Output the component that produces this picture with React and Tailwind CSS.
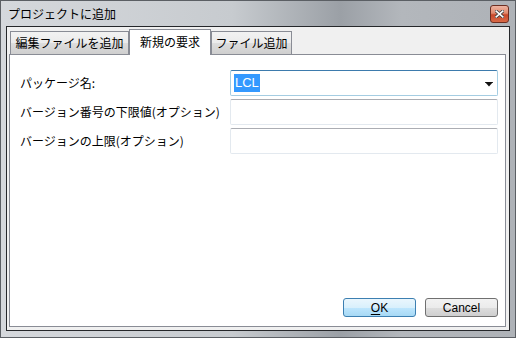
const jp = { fontFamily: '"Noto Sans CJK JP", "Liberation Sans", sans-serif' };

function Tab({ label, active, width }) {
  if (active) {
    return (
      <div
        className="relative z-10 -mb-px flex h-[26px] items-start justify-center border border-b-0 border-[#898c95] bg-white pt-[3px] text-[12px] text-black"
        style={{ width }}
      >
        {label}
      </div>
    );
  }
  return (
    <div
      className="flex h-[23px] items-start justify-center border border-b-0 border-[#898c95] bg-[linear-gradient(180deg,#f2f2f2_0%,#ebebeb_50%,#dddddd_51%,#cfcfcf_100%)] pt-[2px] text-[12px] text-black"
      style={{ width }}
    >
      {label}
    </div>
  );
}

function TextBox({ children, focused }) {
  return (
    <div
      className={
        'relative flex h-[26px] w-[268px] shrink-0 items-center rounded-[2px] border bg-white pl-[3px] ' +
        (focused
          ? 'border-[#a5cde2] border-t-[#3d7bad]'
          : 'border-[#e3e9ef] border-t-[#abadb3]')
      }
    >
      {children}
    </div>
  );
}

export default function App() {
  return (
    <div className="h-[338px] w-[516px] overflow-hidden" style={jp}>
      <div className="flex h-full w-full flex-col border border-[#5b5f64] bg-[linear-gradient(90deg,#d5d8dc_0%,#c7cbcf_45%,#9ba0a6_66%,#b3b7bc_78%,#aeb2b7_100%)]">
        {/* title bar */}
        <div className="flex h-[25px] shrink-0 items-center justify-between pl-[7px] pr-[6px]">
          <span className="text-[12px] text-black">プロジェクトに追加</span>
          <div className="mt-[1px] flex h-[18px] w-[19px] items-center justify-center rounded-[3px] border border-[#6d2f22] bg-[linear-gradient(180deg,#eeb4a2_0%,#e08a6e_45%,#c8482a_55%,#d96a47_100%)]">
            <svg width="9" height="8" viewBox="0 0 9 8">
              <path d="M1 1 L8 7 M8 1 L1 7" stroke="#3c3c3c" strokeWidth="3.2" strokeLinecap="square" />
              <path d="M1.2 1.2 L7.8 6.8 M7.8 1.2 L1.2 6.8" stroke="#ffffff" strokeWidth="1.6" strokeLinecap="square" />
            </svg>
          </div>
        </div>

        {/* client area */}
        <div className="mx-[5px] mb-[6px] flex flex-1 flex-col border border-[#25272a] bg-[#f0f0f0] pb-[3px] pl-[2px] pr-[3px] pt-[2px]">
          <div className="flex items-end pl-[1px]">
            <Tab label="編集ファイルを追加" width={119} />
            <Tab label="新規の要求" active width={82} />
            <Tab label="ファイル追加" width={81} />
          </div>
          <div className="flex flex-1 flex-col border border-[#898c95] bg-white pb-[9px] pr-[6px]">
            <div className="mt-[15px] flex items-center pl-[10px]">
              <span className="w-[210px] shrink-0 text-[12px] text-black">パッケージ名:</span>
              <TextBox focused>
                <span
                  className="bg-[#3399ff] px-[1px] text-[13px] leading-[18px] text-white"
                  style={{ fontFamily: '"Liberation Sans", sans-serif' }}
                >
                  LCL
                </span>
                <svg className="absolute right-[4px] top-[11px]" width="8" height="5" viewBox="0 0 8 5">
                  <path d="M0 0 H8 L4 4.5 Z" fill="#111" />
                  <path d="M0 0 H8" stroke="#111" strokeWidth="1.4" />
                </svg>
              </TextBox>
            </div>
            <div className="mt-[3px] flex items-center pl-[10px]">
              <span className="w-[210px] shrink-0 whitespace-nowrap text-[12px] text-black">バージョン番号の下限値(オプション)</span>
              <TextBox />
            </div>
            <div className="mt-[3px] flex items-center pl-[10px]">
              <span className="w-[210px] shrink-0 text-[12px] text-black">バージョンの上限(オプション)</span>
              <TextBox />
            </div>

            <div className="flex-1" />

            <div className="flex justify-end gap-[9px] pr-[1px]" style={{ fontFamily: '"Liberation Sans", sans-serif' }}>
              <button className="flex h-[19px] w-[73px] items-center justify-center rounded-[3px] border border-[#3c7fb1] bg-[linear-gradient(180deg,#eaf6fd_0%,#d9f0fc_50%,#bee6fd_51%,#a7d9f5_100%)] text-[12px] text-black">
                <span className="underline underline-offset-[2px]">O</span>K
              </button>
              <button className="flex h-[19px] w-[73px] items-center justify-center rounded-[3px] border border-[#707070] bg-[linear-gradient(180deg,#f2f2f2_0%,#ebebeb_50%,#dddddd_51%,#cfcfcf_100%)] text-[12px] text-black">
                Cancel
              </button>
            </div>
          </div>
        </div>
      </div>
    </div>
  );
}
